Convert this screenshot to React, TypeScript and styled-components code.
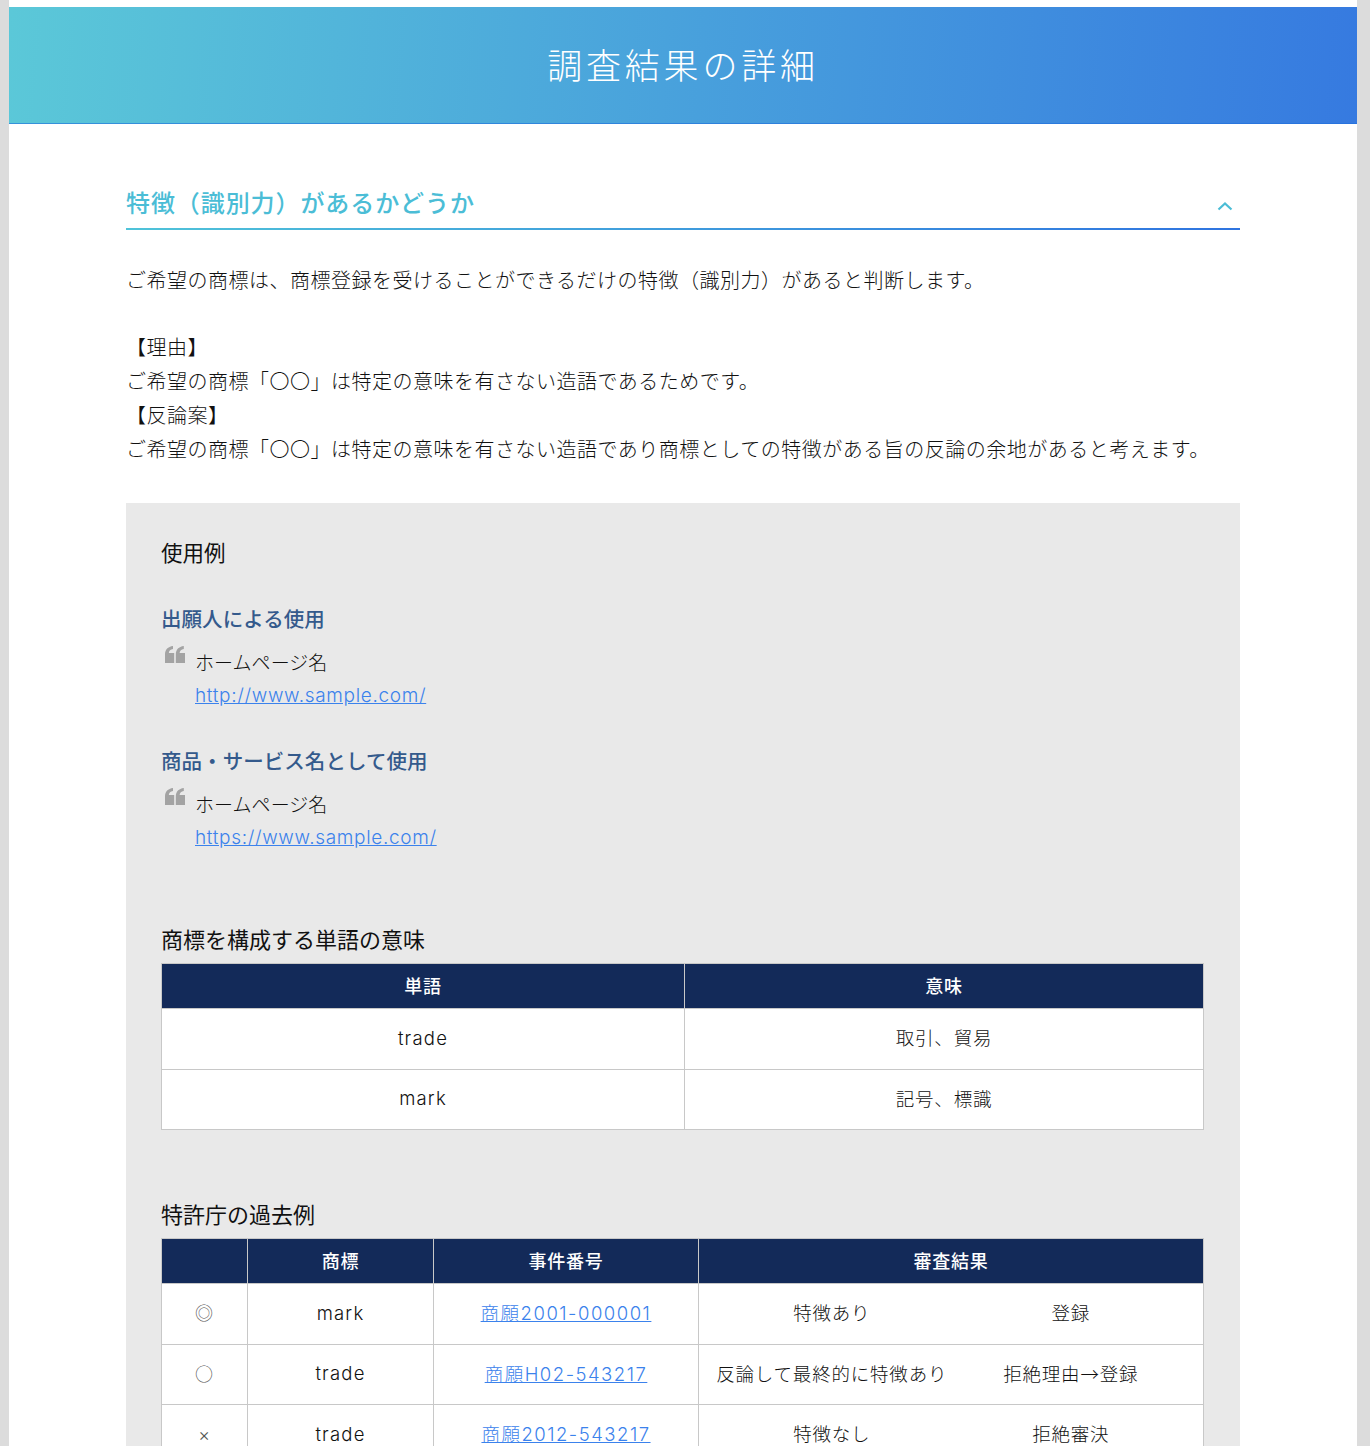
import React from 'react';
import styled, { createGlobalStyle } from 'styled-components';

const latinFont = 'Inter, "Noto Sans CJK JP", sans-serif';

const GlobalStyle = createGlobalStyle`
  html, body {
    margin: 0;
    padding: 0;
    height: 1446px;
    overflow: hidden;
    background: #dcdcdc;
  }
  body {
    font-family: "Noto Sans CJK JP", "Noto Sans", sans-serif;
    font-weight: 300;
    color: #111;
  }
  * { box-sizing: border-box; }
`;

const Page = styled.div`
  width: 1348px;
  height: 1446px;
  margin-left: 9px;
  padding-top: 7px;
  background: #fff;
  overflow: hidden;
`;

const Header = styled.header`
  height: 117px;
  display: flex;
  align-items: center;
  justify-content: center;
  padding-bottom: 3px;
  background: linear-gradient(95deg, #5bc8d8 0%, #367ae0 100%);
  border-bottom: 1px solid rgba(30, 110, 220, 0.6);
`;

const Title = styled.h1`
  margin: 0;
  font-size: 35px;
  line-height: 1;
  font-weight: 300;
  letter-spacing: 3.8px;
  color: #fff;
`;

const Main = styled.main`
  padding: 0 117px;
`;

const SectionHead = styled.div`
  position: relative;
  margin-top: 60px;
  height: 46px;
  display: flex;
  align-items: flex-start;
  justify-content: space-between;
  padding: 0 7px 0 0;
  &::after {
    content: '';
    position: absolute;
    left: 0;
    right: 0;
    bottom: 0;
    height: 2.5px;
    background: linear-gradient(90deg, #4fc3d9, #2f74e0);
  }
`;

const SectionTitle = styled.h2`
  margin: 0;
  font-size: 24px;
  line-height: 36px;
  font-weight: 500;
  letter-spacing: 0.92px;
  color: #4bbdd6;
`;

const Chevron = styled.svg`
  margin-top: 17px;
`;

const Body = styled.div`
  margin-top: 33px;
  font-size: 20px;
  line-height: 33.7px;
  letter-spacing: 0.5px;
`;

const Para = styled.p`
  margin: 0;
  min-height: 33.7px;
  white-space: nowrap;
`;

const Panel = styled.section`
  margin-top: 38px;
  background: #e9e9e9;
  padding: 32px 35px 0;
`;

const PanelTitle = styled.h3`
  margin: 0;
  font-size: 21.5px;
  line-height: 34px;
  font-weight: 400;
`;

const UseHeading = styled.h4<{ $gap: number }>`
  margin: ${(p) => p.$gap}px 0 0;
  font-size: 20.5px;
  line-height: 34px;
  font-weight: 500;
  letter-spacing: 0.05px;
  color: #345a8c;
`;

const Quote = styled.div`
  position: relative;
  margin-top: 10px;
  padding-left: 34px;
  font-size: 19px;
  line-height: 33.5px;
  letter-spacing: 0.05px;
`;

const QuoteMark = styled.svg`
  position: absolute;
  left: 4px;
  top: 1px;
`;

const Ref = styled.a`
  display: block;
  margin-top: 0.5px;
  font-family: ${latinFont};
  color: #3b82ec;
  text-decoration: underline;
  letter-spacing: 0.66px;
`;

const TableTitle = styled.h3<{ $gap: number }>`
  margin: ${(p) => p.$gap}px 0 0;
  font-size: 22px;
  line-height: 32px;
  font-weight: 400;
`;

const Table = styled.table`
  width: 1043px;
  margin-top: 9px;
  border-collapse: collapse;
  table-layout: fixed;
  background: #fff;
  font-size: 18.5px;
  letter-spacing: 0.8px;
`;

const Th = styled.th`
  height: 45px;
  padding: 0 0 3px;
  border: 1px solid #c8c8c8;
  background: #132a59;
  color: #fff;
  font-size: 18px;
  font-weight: 500;
  letter-spacing: 0.7px;
  text-align: center;
`;

const Td = styled.td<{ $join?: 'left' | 'right'; $latin?: boolean }>`
  height: 60.5px;
  padding: 0 0 3px;
  border: 1px solid #c8c8c8;
  text-align: center;
  white-space: nowrap;
  ${(p) => p.$join === 'left' && 'border-right: none;'}
  ${(p) => p.$join === 'right' && 'border-left: none; padding-right: 26px;'}
  ${(p) => p.$latin && `font-family: ${latinFont}; letter-spacing: 1.2px; padding-bottom: 2px;`}
`;

const Mark = styled.span<{ $small?: boolean }>`
  font-size: 18px;
  color: #555;
  ${(p) => p.$small && `font-family: ${latinFont};`}
`;

const CaseLink = styled.a`
  font-family: ${latinFont};
  color: #3b82ec;
  text-decoration: underline;
  letter-spacing: 1.5px;
`;

const wordRows = [
  ['trade', '取引、貿易'],
  ['mark', '記号、標識'],
];

const caseRows = [
  ['◎', 'mark', '商願2001-000001', '特徴あり', '登録'],
  ['○', 'trade', '商願H02-543217', '反論して最終的に特徴あり', '拒絶理由→登録'],
  ['×', 'trade', '商願2012-543217', '特徴なし', '拒絶審決'],
];

const ChevronUp = () => (
  <Chevron width="16" height="10" viewBox="0 0 16 10" fill="none" stroke="#4bbdd6" strokeWidth="2.2">
    <path d="M1.5 8.5 L8 2.5 L14.5 8.5" />
  </Chevron>
);

const QuoteIcon = () => (
  <QuoteMark width="20" height="17" viewBox="0 0 20 17" fill="#a3a3a3">
    <path d="M0 8.5C0 3.5 3 .6 8 0v3C5.5 3.4 4 4.8 3.8 7H9.2v10H0zM10.8 8.5c0-5 3-7.9 8-8.5v3c-2.5.4-4 1.8-4.2 4H20v10h-9.2z" />
  </QuoteMark>
);

const App = () => (
  <Page>
    <GlobalStyle />
    <Header>
      <Title>調査結果の詳細</Title>
    </Header>
    <Main>
      <SectionHead>
        <SectionTitle>特徴（識別力）があるかどうか</SectionTitle>
        <ChevronUp />
      </SectionHead>
      <Body>
        <Para>ご希望の商標は、商標登録を受けることができるだけの特徴（識別力）があると判断します。</Para>
        <Para />
        <Para>【理由】</Para>
        <Para>ご希望の商標「〇〇」は特定の意味を有さない造語であるためです。</Para>
        <Para>【反論案】</Para>
        <Para>ご希望の商標「〇〇」は特定の意味を有さない造語であり商標としての特徴がある旨の反論の余地があると考えます。</Para>
      </Body>
      <Panel>
        <PanelTitle>使用例</PanelTitle>
        <UseHeading $gap={32}>出願人による使用</UseHeading>
        <Quote>
          <QuoteIcon />
          ホームページ名
          <Ref href="#">http://www.sample.com/</Ref>
        </Quote>
        <UseHeading $gap={30}>商品・サービス名として使用</UseHeading>
        <Quote>
          <QuoteIcon />
          ホームページ名
          <Ref href="#">https://www.sample.com/</Ref>
        </Quote>

        <TableTitle $gap={68}>商標を構成する単語の意味</TableTitle>
        <Table>
          <colgroup>
            <col style={{ width: 523 }} />
            <col />
          </colgroup>
          <thead>
            <tr>
              <Th>単語</Th>
              <Th>意味</Th>
            </tr>
          </thead>
          <tbody>
            {wordRows.map((r) => (
              <tr key={r[0]}>
                <Td $latin>{r[0]}</Td>
                <Td>{r[1]}</Td>
              </tr>
            ))}
          </tbody>
        </Table>

        <TableTitle $gap={67}>特許庁の過去例</TableTitle>
        <Table>
          <colgroup>
            <col style={{ width: 86 }} />
            <col style={{ width: 186 }} />
            <col style={{ width: 265 }} />
            <col style={{ width: 266 }} />
            <col />
          </colgroup>
          <thead>
            <tr>
              <Th />
              <Th>商標</Th>
              <Th>事件番号</Th>
              <Th colSpan={2}>審査結果</Th>
            </tr>
          </thead>
          <tbody>
            {caseRows.map((r) => (
              <tr key={r[2]}>
                <Td>
                  <Mark $small={r[0] === '×'}>{r[0]}</Mark>
                </Td>
                <Td $latin>{r[1]}</Td>
                <Td>
                  <CaseLink href="#">{r[2]}</CaseLink>
                </Td>
                <Td $join="left">{r[3]}</Td>
                <Td $join="right">{r[4]}</Td>
              </tr>
            ))}
          </tbody>
        </Table>
      </Panel>
    </Main>
  </Page>
);

export default App;
